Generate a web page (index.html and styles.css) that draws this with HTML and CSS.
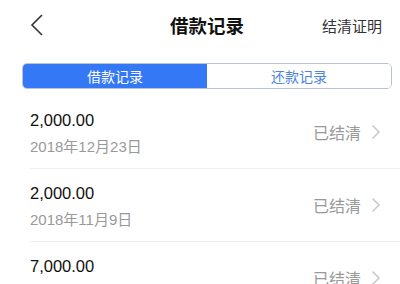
FILE: index.html
```html
<!DOCTYPE html>
<html lang="zh">
<head>
<meta charset="utf-8">
<link rel="stylesheet" href="styles.css">
</head>
<body>
<div class="page">
  <header class="header">
    <svg class="back" width="14" height="22" viewBox="0 0 14 22"><path d="M12 1 L2 11 L12 21" fill="none" stroke="#333" stroke-width="1.6"/></svg>
    <h1 class="title">借款记录</h1>
    <span class="action">结清证明</span>
  </header>
  <div class="tabs">
    <div class="tab active">借款记录</div>
    <div class="tab">还款记录</div>
  </div>
  <ul class="list">
    <li class="row">
      <div class="info"><div class="amount">2,000.00</div><div class="date">2018年12月23日</div></div>
      <div class="status">已结清<svg class="chev" width="10" height="16" viewBox="0 0 10 16"><path d="M1.5 1.5 L8 8 L1.5 14.5" fill="none" stroke="#c8c8c8" stroke-width="1.5"/></svg></div>
    </li>
    <li class="row">
      <div class="info"><div class="amount">2,000.00</div><div class="date">2018年11月9日</div></div>
      <div class="status">已结清<svg class="chev" width="10" height="16" viewBox="0 0 10 16"><path d="M1.5 1.5 L8 8 L1.5 14.5" fill="none" stroke="#c8c8c8" stroke-width="1.5"/></svg></div>
    </li>
    <li class="row">
      <div class="info"><div class="amount">7,000.00</div><div class="date">2018年10月8日</div></div>
      <div class="status">已结清<svg class="chev" width="10" height="16" viewBox="0 0 10 16"><path d="M1.5 1.5 L8 8 L1.5 14.5" fill="none" stroke="#c8c8c8" stroke-width="1.5"/></svg></div>
    </li>
  </ul>
</div>
</body>
</html>
```
FILE: styles.css
```css
* { box-sizing: border-box; }
html, body { margin: 0; padding: 0; background: #fff; }
body { font-family: "Liberation Sans", "Noto Sans CJK SC", sans-serif; color: #222; width: 400px; height: 284px; overflow: hidden; }
.header { height: 50px; display: flex; align-items: center; justify-content: space-between; padding: 0 18px 0 30px; position: relative; }
.back { display: block; }
.title { margin: 0; font-size: 18.5px; font-weight: bold; color: #111; position: absolute; left: 0; right: 0; text-align: center; pointer-events: none; padding-left: 14px; }
.action { font-size: 15px; color: #333; }
.tabs { display: flex; margin: 13px 8px 0 22px; height: 26px; border: 1px solid #b9c3d3; border-radius: 5px; overflow: hidden; }
.tab { flex: 1; display: flex; align-items: center; justify-content: center; font-size: 14px; color: #4c84de; background: #fff; }
.tab.active { background: #3478f5; color: #fff; }
.list { list-style: none; margin: 7px 0 0; padding: 0 0 0 30px; }
.row { height: 73px; display: flex; align-items: center; justify-content: space-between; padding: 0 19px 0 0; border-bottom: 1px solid #f0f0f0; }
.info { display: flex; flex-direction: column; gap: 8px; padding-top: 2px; }
.amount { font-size: 16.5px; line-height: 20px; color: #111; }
.date { font-size: 15px; line-height: 18px; color: #999; }
.status { display: flex; align-items: center; gap: 10px; font-size: 16px; color: #999; }
.chev { display: block; }
```
